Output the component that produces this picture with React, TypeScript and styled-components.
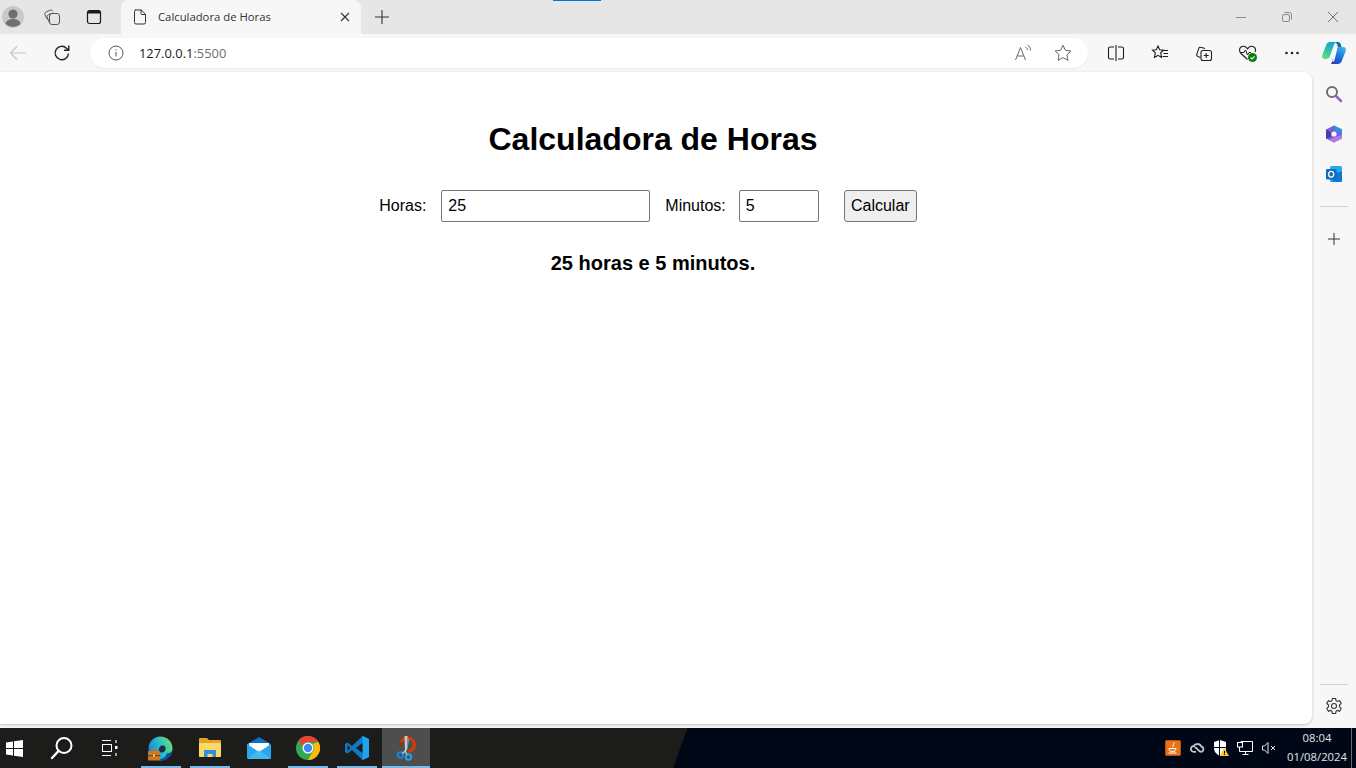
import { useState } from "react";
import styled, { createGlobalStyle } from "styled-components";

const GlobalStyle = createGlobalStyle`
  html, body {
    margin: 0;
    padding: 0;
    background: #f7f7f7;
    overflow: hidden;
  }
  * {
    box-sizing: border-box;
  }
`;

export default function App() {
  const [horas, setHoras] = useState("25");
  const [minutos, setMinutos] = useState("5");

  return (
    <Screen>
      <GlobalStyle />
      <TabStrip>
        <StripLeft>
          <Avatar>
            <svg width="22" height="22" viewBox="0 0 22 22">
              <circle cx="11" cy="11" r="11" fill="#c9c9c7" />
              <circle cx="11" cy="8" r="4.6" fill="#6f6f6f" />
              <path d="M3.5 18c.6-3.6 3.6-5 7.500-5s6.900 1.400 7.500 5a11 11 0 0 1-15 0z" fill="#6f6f6f" />
            </svg>
          </Avatar>
          <StripButton>
            <svg width="18" height="18" viewBox="0 0 18 18" fill="none" stroke="#555" strokeWidth="1">
              <rect x="6.500" y="5.500" width="10" height="11" rx="2.500" />
              <path d="M6.500 14.800 4.300 9.500c-.5-1.300 0-2.300 1.200-2.800L9.800 5" />
              <path d="M4.300 11.500 2 6.800c-.5-1.200-.1-2.200 1.100-2.800l4-1.800c1.200-.4 2.100-.1 2.700 1" />
            </svg>
          </StripButton>
          <StripButton>
            <svg width="16" height="16" viewBox="0 0 16 16" fill="none">
              <rect x="1.500" y="1.500" width="13" height="13" rx="2" stroke="#1a1a1a" strokeWidth="1.200" />
              <path d="M2 2h12v2.500H2z" fill="#1a1a1a" />
            </svg>
          </StripButton>
        </StripLeft>
        <Tab>
          <svg width="14" height="16" viewBox="0 0 14 16" fill="none" stroke="#333" strokeWidth="1">
            <path d="M2.500 1h5.800L12.500 5.200V13.500a1.500 1.500 0 0 1-1.500 1.500H3a1.500 1.500 0 0 1-1.500-1.500V2.500A1.500 1.500 0 0 1 3 1z" />
            <path d="M8 1v3.500a1 1 0 0 0 1 1h3.500" />
          </svg>
          <TabTitle>Calculadora de Horas</TabTitle>
          <TabClose>
            <svg width="10" height="10" viewBox="0 0 10 10" stroke="#333" strokeWidth="1.100">
              <path d="M1 1l8 8M9 1L1 9" />
            </svg>
          </TabClose>
        </Tab>
        <NewTab>
          <svg width="16" height="16" viewBox="0 0 16 16" stroke="#333" strokeWidth="1.100">
            <path d="M8 1v14M1 8h14" />
          </svg>
        </NewTab>
        <LoadBar />
        <WindowControls>
          <WindowButton>
            <svg width="12" height="12" viewBox="0 0 12 12" stroke="#8a8a8a">
              <path d="M1 6.500h10" />
            </svg>
          </WindowButton>
          <WindowButton>
            <svg width="12" height="12" viewBox="0 0 12 12" fill="none" stroke="#8a8a8a">
              <rect x="1.500" y="3.500" width="7" height="7" rx="1.500" />
              <path d="M3.500 1.500h5a2 2 0 0 1 2 2v5" />
            </svg>
          </WindowButton>
          <WindowButton>
            <svg width="12" height="12" viewBox="0 0 12 12" stroke="#6f6f6f">
              <path d="M1 1l10 10M11 1L1 11" />
            </svg>
          </WindowButton>
        </WindowControls>
      </TabStrip>

      <Toolbar>
        <BackButton>
          <svg width="18" height="16" viewBox="0 0 18 16" fill="none" stroke="#c4c4c4" strokeWidth="1.200">
            <path d="M17 8H1.500M8 1.500 1.500 8 8 14.500" />
          </svg>
        </BackButton>
        <ReloadButton>
          <svg width="18" height="18" viewBox="0 0 18 18" fill="none" stroke="#222" strokeWidth="1.400">
            <path d="M15.500 9.500A6.700 6.700 0 1 1 13.500 4.200L15.500 6" />
            <path d="M15.800 1.500V6.300H11" />
          </svg>
        </ReloadButton>
        <AddressBar>
          <svg width="16" height="16" viewBox="0 0 16 16" fill="none" stroke="#555">
            <circle cx="8" cy="8" r="7" />
            <path d="M8 7v4.500M8 4.300v1.200" />
          </svg>
          <UrlText>
            127.0.0.1<UrlPort>:5500</UrlPort>
          </UrlText>
          <AddressActions>
            <AddressIcon>
              <svg width="18" height="18" viewBox="0 0 18 18" fill="none" stroke="#666" strokeWidth="1">
                <path d="M1.500 16 6.500 3.500 11.500 16M3.300 12h6.400" />
                <path d="M11.500 3c1.300.7 1.900 1.800 2 3.200M13.500 1c2 1.200 3 3 3 5.500" />
              </svg>
            </AddressIcon>
            <AddressIcon>
              <svg width="18" height="18" viewBox="0 0 18 18" fill="none" stroke="#666" strokeWidth="1">
                <path d="M9 1.200l2.400 5.100 5.500.7-4 3.800 1 5.500L9 13.600l-4.900 2.700 1-5.500-4-3.800 5.500-.7z" />
              </svg>
            </AddressIcon>
          </AddressActions>
        </AddressBar>
        <ToolGroup>
          <ToolIcon>
            <svg width="18" height="18" viewBox="0 0 18 18" fill="none" stroke="#1f1f1f" strokeWidth="1.100">
              <path d="M7 3H3a1.500 1.500 0 0 0-1.500 1.500v9A1.500 1.500 0 0 0 3 15h4M11 3h4a1.500 1.500 0 0 1 1.500 1.500v9A1.500 1.500 0 0 1 15 15h-4M9 1v16" />
            </svg>
          </ToolIcon>
          <ToolIcon>
            <svg width="18" height="18" viewBox="0 0 18 18" fill="none" stroke="#1f1f1f" strokeWidth="1.100">
              <path d="M7 2l1.700 3.700 3.800.5-2.800 2.600.8 4.700L7 11.300l-3.500 2.200.8-4.700L1.500 6.200l3.800-.5z" />
              <path d="M12 6.500h5M12.500 9.500h4.500M11.500 12.500h5.500" />
            </svg>
          </ToolIcon>
          <ToolIcon>
            <svg width="18" height="18" viewBox="0 0 18 18" fill="none" stroke="#1f1f1f" strokeWidth="1.100">
              <path d="M5.500 13.500 2.800 12.400c-.9-.4-1.300-1.300-1-2.100l2-6c.3-.9 1.200-1.300 2-1L10 4.500" />
              <rect x="6" y="6.500" width="10.500" height="10" rx="2" />
              <path d="M11.200 9v5M8.700 11.500h5" />
            </svg>
          </ToolIcon>
          <ToolIcon>
            <svg width="20" height="20" viewBox="0 0 20 20" fill="none">
              <path d="M9.500 16.500 3 10.500C1 8.500 1 5.500 3 4c1.800-1.300 4.300-1 5.500.7l1 1.200 1-1.200c1.200-1.700 3.700-2 5.500-.7 1.600 1.200 1.900 3.200 1 5" stroke="#1f1f1f" strokeWidth="1.100" />
              <path d="M2 9.500h4l1.500-2.500 2 5 1.500-2.500h2" stroke="#1f1f1f" strokeWidth="1" />
              <circle cx="14.500" cy="14.500" r="4.500" fill="#107c10" />
              <path d="M12.500 14.500l1.500 1.500 2.500-2.700" stroke="#fff" strokeWidth="1.100" />
            </svg>
          </ToolIcon>
          <ToolIcon>
            <svg width="16" height="4" viewBox="0 0 16 4" fill="#1f1f1f">
              <circle cx="2.500" cy="2" r="1.300" />
              <circle cx="8" cy="2" r="1.300" />
              <circle cx="13.500" cy="2" r="1.300" />
            </svg>
          </ToolIcon>
        </ToolGroup>
        <CopilotSlot>
          <svg width="24" height="22" viewBox="0 0 24 22">
            <defs>
              <linearGradient id="copLeft" x1="0.700" y1="0" x2="0.200" y2="1">
                <stop offset="0" stopColor="#1c9fd8" />
                <stop offset="0.600" stopColor="#33c9a0" />
                <stop offset="1" stopColor="#6fdc7c" />
              </linearGradient>
              <linearGradient id="copRight" x1="0.800" y1="0" x2="0.300" y2="1">
                <stop offset="0" stopColor="#3fb4f2" />
                <stop offset="0.600" stopColor="#1770d6" />
                <stop offset="1" stopColor="#2a3fbf" />
              </linearGradient>
            </defs>
            <path d="M13 0h3c1.500 0 2.500 1 3 3l.5 2H16c-.5-2-1.500-4.500-3-5z" fill="#0d6f9c" />
            <path d="M8 17h3.500L10 20c-.3.8-.6 1.500-1 2h6c-2 0-3.300-1-3.800-3l-.7-2z" fill="#1c3fb0" />
            <path d="M8 0h7c-2 .5-3 2-3.500 4L8 14c-.5 2-2 3-4 3H2.500C.5 17-.3 15 .3 13L4 3.500C4.700 1 6 0 8 0z" fill="url(#copLeft)" />
            <path d="M16 5h5.500c2 0 2.800 2 2.200 4L20 18.500c-.7 2.300-2 3.500-4.500 3.500H9c2-.5 3-2 3.500-4L15 8c.3-1.500.5-3 1-3z" fill="url(#copRight)" />
          </svg>
        </CopilotSlot>
      </Toolbar>

      <Middle>
        <Page>
          <Content>
            <Title>Calculadora de Horas</Title>
            <HoursForm onSubmit={(e) => e.preventDefault()}>
              <FieldLabel htmlFor="horas">Horas:</FieldLabel>
              <HoursInput id="horas" value={horas} onChange={(e) => setHoras(e.target.value)} />
              <MinutesLabel htmlFor="minutos">Minutos:</MinutesLabel>
              <MinutesInput id="minutos" value={minutos} onChange={(e) => setMinutos(e.target.value)} />
              <CalcButton type="submit">Calcular</CalcButton>
            </HoursForm>
            <Result>25 horas e 5 minutos.</Result>
          </Content>
        </Page>
        <Sidebar>
          <SideSlot>
            <svg width="18" height="18" viewBox="0 0 18 18" fill="none">
              <circle cx="7" cy="7" r="5" stroke="#6e6e6e" strokeWidth="2" />
              <path d="M10.800 10.800 16 16" stroke="#8f63c9" strokeWidth="2.600" strokeLinecap="round" />
            </svg>
          </SideSlot>
          <SideSlot>
            <svg width="18" height="18" viewBox="0 0 18 18">
              <path d="M9 .5 17 4.500v9L9 17.500 1 13.500v-9z" fill="#7a5fd0" />
              <path d="M9 .5 17 4.500V10L12 6.500 9 5.500z" fill="#2f8fe0" />
              <path d="M1 4.500 6 7.500V12L1 13.500z" fill="#4f38a8" />
              <path d="M17 10v3.500L9 17.500 4 15l5-2.500z" fill="#b878e8" />
              <circle cx="9" cy="9" r="2.600" fill="#f7f7f7" />
            </svg>
          </SideSlot>
          <SideSlot>
            <svg width="18" height="18" viewBox="0 0 18 18">
              <rect x="5" y="1" width="12" height="16" rx="1.500" fill="#28a8ea" />
              <path d="M10 8l7-1.500V16a1 1 0 0 1-1 1H7z" fill="#0f78d4" />
              <rect x="1" y="4" width="10.500" height="10.500" rx="1.200" fill="#0f6cbd" />
              <ellipse cx="6.200" cy="9.200" rx="2.500" ry="2.900" fill="none" stroke="#fff" strokeWidth="1.300" />
            </svg>
          </SideSlot>
          <SideDivider />
          <SideSlot>
            <svg width="14" height="14" viewBox="0 0 14 14" stroke="#333">
              <path d="M7 1v12M1 7h12" />
            </svg>
          </SideSlot>
          <SideSpacer />
          <BottomDivider />
          <SideSlot>
            <svg width="18" height="18" viewBox="0 0 18 18" fill="none" stroke="#333" strokeWidth="1.100">
              <path d="M7.400 1.500h3.200l.5 2.300 1.300.7 2.200-.8 1.600 2.800-1.700 1.600v1.700l1.700 1.600-1.600 2.800-2.200-.8-1.300.7-.5 2.400H7.400l-.5-2.400-1.300-.7-2.200.8-1.600-2.800 1.700-1.600V8.100L1.800 6.500l1.600-2.800 2.200.8 1.300-.7z" />
              <circle cx="9" cy="9" r="2.500" />
            </svg>
          </SideSlot>
        </Sidebar>
      </Middle>

      <Taskbar>
        <StartButton>
          <svg width="17" height="17" viewBox="0 0 17 17" fill="#fff">
            <path d="M0 2.500 7 1.500V8H0zM8 1.300 17 0V8H8zM0 9h7v6.500L0 14.500zM8 9h9v8L8 15.700z" />
          </svg>
        </StartButton>
        <TaskSlot>
          <svg width="24" height="24" viewBox="0 0 24 24" fill="none" stroke="#fff">
            <circle cx="14" cy="9.500" r="7.500" strokeWidth="2" />
            <path d="M8.500 15 2 22" strokeWidth="2.400" strokeLinecap="round" />
          </svg>
        </TaskSlot>
        <TaskSlot>
          <svg width="18" height="18" viewBox="0 0 18 18" fill="none" stroke="#fff">
            <path d="M1 1.500h9M1 16.500h9" />
            <rect x="1.500" y="5.500" width="9" height="7" />
            <path d="M15 1v3M15 14v3" strokeWidth="1.200" />
            <rect x="14" y="7" width="2.500" height="3" fill="#fff" stroke="none" />
          </svg>
        </TaskSlot>
        <AppGroup>
          <TaskApp $open>
            <svg width="25" height="25" viewBox="0 0 25 25">
              <defs>
                <linearGradient id="edgeRing" x1="0" y1="0.700" x2="1" y2="0.300">
                  <stop offset="0" stopColor="#1580d8" />
                  <stop offset="0.550" stopColor="#2cc0c8" />
                  <stop offset="1" stopColor="#6edc72" />
                </linearGradient>
              </defs>
              <circle cx="12.500" cy="12.500" r="12" fill="url(#edgeRing)" />
              <path d="M24.500 14c-.5 6-5.500 10.500-11.500 10.500-2 0-4-.5-5-1.500 5 1 10-1 10.500-5.500 1.500.3 4.500-.5 6-3.500z" fill="#0d4f9a" />
              <path d="M11 15c-.5-3 1-5.500 3.500-5.500s3.500 2 3 4c-.5 2-2 3-3.500 3-1.500 0-2.500-.5-3-1.500z" fill="#173042" />
              <rect x="0" y="15" width="12" height="9.500" rx="1" fill="#c8782a" />
              <rect x="0" y="19" width="12" height="1.200" fill="#7a4310" />
              <rect x="5" y="18.300" width="2" height="2.400" fill="#f2c46a" />
              <rect x="4" y="13" width="4" height="2.500" fill="none" stroke="#c8782a" />
            </svg>
          </TaskApp>
          <TaskApp $open>
            <svg width="24" height="22" viewBox="0 0 24 22">
              <path d="M1 2a1 1 0 0 1 1-1h7l2 2h11a1 1 0 0 1 1 1v15a1 1 0 0 1-1 1H2a1 1 0 0 1-1-1z" fill="#e0a526" />
              <path d="M1 6h22v13a1 1 0 0 1-1 1H2a1 1 0 0 1-1-1z" fill="#fbd968" />
              <path d="M6 20v-7h12v7h-3.500v-3h-5v3z" fill="#2f8fd8" />
            </svg>
          </TaskApp>
          <TaskApp>
            <svg width="24" height="22" viewBox="0 0 24 22">
              <path d="M0 7 12 0l12 7v13a2 2 0 0 1-2 2H2a2 2 0 0 1-2-2z" fill="#0c70c4" />
              <path d="M2 6h20v6l-10 5-10-5z" fill="#fff" />
              <path d="M0 7l12 8 12-8v13a2 2 0 0 1-2 2H2a2 2 0 0 1-2-2z" fill="#28a8ea" />
              <path d="M0 22 12 13l12 9z" fill="#50c0f2" opacity="0.700" />
            </svg>
          </TaskApp>
          <TaskApp $open>
            <svg width="24" height="24" viewBox="0 0 24 24">
              <circle cx="12" cy="12" r="12" fill="#34a853" />
              <path d="M12 0a12 12 0 0 1 10.400 6H12a6 6 0 0 0-5.600 3.900L2.400 4.300A12 12 0 0 1 12 0z" fill="#ea4335" />
              <path d="M22.400 6A12 12 0 0 1 12 24l4.900-8.600A6 6 0 0 0 16.500 8z" fill="#fbbc05" />
              <circle cx="12" cy="12" r="5.500" fill="#fff" />
              <circle cx="12" cy="12" r="4.200" fill="#4285f4" />
            </svg>
          </TaskApp>
          <TaskApp $open>
            <svg width="24" height="24" viewBox="0 0 24 24">
              <path d="M17.500 0 24 3v18l-6.500 3L7 14l-4.500 3.500L0 16V8l2.500-1.500L7 10z" fill="#0e7ac4" />
              <path d="M17.500 0 24 3v18l-6.500 3z" fill="#23a3ee" />
              <path d="M17.500 7 10.800 12l6.700 5z" fill="#1c1c1a" />
              <path d="M2.500 9 5.300 12l-2.800 3z" fill="#1c1c1a" />
            </svg>
          </TaskApp>
          <ActiveApp $open>
            <svg width="24" height="26" viewBox="0 0 24 26" fill="none">
              <path d="M7 7c2-4 6-5 9.500-3.500 3.500 1.800 5 6 3 9.500-1 2-3 3-5 3.500" stroke="#d83b01" strokeWidth="3" />
              <path d="M7 7c-.7 1.500-.5 3 .3 4.300" stroke="#a82e10" strokeWidth="2" />
              <path d="M10.500 1h3v12l-1 3h-1.500z" fill="#c9c9c9" />
              <path d="M13.500 3l2 1.500-2 9z" fill="#8a8a8a" />
              <circle cx="6.500" cy="20" r="2.700" stroke="#1585e0" strokeWidth="2" />
              <circle cx="14.500" cy="22" r="2.700" stroke="#1fa0ee" strokeWidth="2" />
              <path d="M8.500 18.500 11 16l2 3.500" stroke="#d0d0d0" strokeWidth="1.300" />
            </svg>
          </ActiveApp>
        </AppGroup>
        <Tray>
          <TrayIcon>
            <svg width="16" height="16" viewBox="0 0 16 16" fill="none">
              <rect x=".5" y=".5" width="15" height="15" rx="1" fill="#e8711a" stroke="#b5500f" />
              <path d="M9 2.500c1 2-2 2.500-1 4.500M4 8.500h7c0 2-1 3-3.500 3S4 10.500 4 8.500zM3.500 13h8" stroke="#fff" />
            </svg>
          </TrayIcon>
          <TrayIcon>
            <svg width="15" height="10" viewBox="0 0 15 10" fill="none" stroke="#c4c4c4" strokeWidth="1.800">
              <path d="M6 8.800H3.800a2.900 2.900 0 0 1 0-5.800C4.500 1.500 6 1 7.500 1c2 0 3.200 1.200 3.700 2.500a2.700 2.700 0 0 1 0 5.300C8.500 8.800 7 4 4.500 4.500" />
            </svg>
          </TrayIcon>
          <TrayIcon>
            <svg width="16" height="16" viewBox="0 0 16 16">
              <path d="M7 0l6 2v6c0 4-3 6.500-6 8-3-1.500-6-4-6-8V2z" fill="#fff" />
              <path d="M6.500 0v16M1 7.500h12" stroke="#000818" />
              <path d="M11.500 8 16 16H7z" fill="#f7c325" />
              <path d="M11.500 11v2.500M11.500 14.200v.8" stroke="#000" />
            </svg>
          </TrayIcon>
          <TrayIcon>
            <svg width="16" height="14" viewBox="0 0 16 14" fill="none" stroke="#fff">
              <path d="M4 3.500V.5h11.500v10h-13" />
              <rect x=".5" y="1.500" width="5" height="4.500" fill="#000818" />
              <path d="M2.500 6v4.500M8.500 10.500v3M5.500 13.500h6" />
            </svg>
          </TrayIcon>
          <TrayIcon>
            <svg width="14" height="14" viewBox="0 0 14 14" fill="none" stroke="#e4e4e4">
              <path d="M.5 5v4h2L6 12.500v-11L2.500 5zM9 5l4 4M13 5 9 9" />
            </svg>
          </TrayIcon>
          <Clock>
            <span>08:04</span>
            <span>01/08/2024</span>
          </Clock>
          <ShowDesktop />
        </Tray>
      </Taskbar>
    </Screen>
  );
}

const Screen = styled.div`
  width: 1356px;
  height: 768px;
  display: flex;
  flex-direction: column;
  background: #f7f7f7;
  font-family: "Open Sans", "Noto Sans", sans-serif;
  overflow: hidden;
`;

const TabStrip = styled.div`
  position: relative;
  height: 34px;
  display: flex;
  background: #e6e6e6;
`;

const StripLeft = styled.div`
  width: 121px;
  display: flex;
  align-items: center;
`;

const Avatar = styled.div`
  width: 26px;
  margin-right: 5px;
  display: flex;
  justify-content: center;
`;

const StripButton = styled.div`
  width: 42px;
  display: flex;
  justify-content: center;
  align-items: center;
`;

const Tab = styled.div`
  width: 240px;
  display: flex;
  align-items: center;
  padding: 0 9px 1px 12px;
  background: #f7f7f7;
  border-radius: 8px 8px 0 0;
`;

const TabTitle = styled.span`
  flex: 1;
  margin-left: 11px;
  font-size: 11.300px;
  color: #333;
  white-space: nowrap;
`;

const TabClose = styled.div`
  width: 14px;
  display: flex;
  justify-content: center;
`;

const NewTab = styled.div`
  width: 42px;
  display: flex;
  justify-content: center;
  align-items: center;
`;

const LoadBar = styled.div`
  position: absolute;
  left: 553px;
  top: 0;
  width: 48px;
  height: 1px;
  background: #0078d4;
`;

const WindowControls = styled.div`
  margin-left: auto;
  display: flex;
`;

const WindowButton = styled.div`
  width: 46px;
  display: flex;
  justify-content: center;
  align-items: center;
`;

const Toolbar = styled.div`
  height: 38px;
  display: flex;
  align-items: center;
`;

const BackButton = styled.div`
  width: 35px;
  display: flex;
  justify-content: center;
  align-items: center;
`;

const ReloadButton = styled.div`
  width: 55px;
  padding-right: 1px;
  display: flex;
  justify-content: center;
  align-items: center;
`;

const AddressBar = styled.div`
  width: 998px;
  height: 30px;
  display: flex;
  align-items: center;
  padding-left: 18px;
  border-radius: 15px;
  background: #fff;
  box-shadow: 0 1px 2px rgba(0, 0, 0, 0.06);
`;

const UrlText = styled.span`
  margin-left: 15px;
  font-size: 12.900px;
  color: #1a1a1a;
`;

const UrlPort = styled.span`
  color: #6f6f6f;
`;

const AddressActions = styled.div`
  margin-left: auto;
  display: flex;
  padding-right: 5px;
`;

const AddressIcon = styled.div`
  width: 40px;
  height: 30px;
  display: flex;
  justify-content: center;
  align-items: center;
`;

const ToolIcon = styled.div`
  width: 44px;
  height: 30px;
  display: flex;
  justify-content: center;
  align-items: center;
`;

const ToolGroup = styled.div`
  display: flex;
  margin-left: 6px;
`;

const CopilotSlot = styled.div`
  width: 40px;
  display: flex;
  justify-content: center;
`;

const Middle = styled.div`
  height: 656px;
  display: flex;
`;

const Page = styled.main`
  width: 1312px;
  height: 652px;
  background: #fff;
  border-radius: 0 8px 8px 0;
  box-shadow: 0 1px 3px rgba(0, 0, 0, 0.22);
`;

const Content = styled.div`
  width: 1306px;
  padding-top: 49px;
  color: #000;
  font-family: "Liberation Sans", Arial, sans-serif;
  text-align: center;
`;

const Title = styled.h1`
  margin: 0 0 32px;
  font-size: 32px;
  line-height: 37px;
  font-weight: 700;
`;

const HoursForm = styled.form`
  display: flex;
  justify-content: center;
  align-items: center;
  height: 32px;
  padding-right: 10px;
`;

const FieldLabel = styled.label`
  font-size: 16px;
  margin-right: 15px;
`;

const MinutesLabel = styled(FieldLabel)`
  margin-right: 13px;
`;

const TextField = styled.input`
  height: 32px;
  padding: 0 6px;
  border: 1px solid #767676;
  border-radius: 2px;
  background: #fff;
  color: #000;
  font: 16px "Liberation Sans", Arial, sans-serif;
  outline: none;
`;

const HoursInput = styled(TextField)`
  width: 209px;
  margin-right: 15px;
`;

const MinutesInput = styled(TextField)`
  width: 80px;
  margin-right: 25px;
`;

const CalcButton = styled.button`
  width: 73px;
  height: 32px;
  padding: 0;
  border: 1px solid #767676;
  border-radius: 3px;
  background: #efefef;
  color: #000;
  font: 16px "Liberation Sans", Arial, sans-serif;
`;

const Result = styled.p`
  margin: 30px 0 0;
  font-size: 20px;
  line-height: 23px;
  font-weight: 700;
`;

const Sidebar = styled.aside`
  width: 44px;
  display: flex;
  flex-direction: column;
  align-items: center;
  padding: 2px 0;
`;

const SideSlot = styled.div`
  width: 44px;
  height: 40px;
  display: flex;
  justify-content: center;
  align-items: center;
`;

const SideDivider = styled.div`
  width: 28px;
  height: 1px;
  margin: 12px 0;
  background: #d0d0d0;
`;

const BottomDivider = styled(SideDivider)`
  margin: 0 0 1px;
`;

const SideSpacer = styled.div`
  flex: 1;
`;

const Taskbar = styled.footer`
  height: 40px;
  display: flex;
  background: linear-gradient(110deg, #1c1c1a 0 645.800px, #000818 646.400px);
`;

const TaskSlot = styled.div`
  width: 48px;
  display: flex;
  justify-content: center;
  align-items: center;
`;

const StartButton = styled(TaskSlot)`
  width: 38px;
  justify-content: flex-start;
  padding-left: 6px;
`;

const AppGroup = styled.div`
  display: flex;
  margin-left: 2px;
`;

const TaskApp = styled.div<{ $open?: boolean }>`
  position: relative;
  width: 49px;
  display: flex;
  justify-content: center;
  align-items: center;
  &::after {
    content: "";
    display: ${(p) => (p.$open ? "block" : "none")};
    position: absolute;
    bottom: 0;
    left: 5px;
    right: 4px;
    height: 2px;
    background: #76b9ed;
  }
`;

const ActiveApp = styled(TaskApp)`
  width: 48px;
  margin-left: 1px;
  background: #4d4e4e;
  &::after {
    left: 0;
    right: 0;
  }
`;

const Tray = styled.div`
  margin-left: auto;
  display: flex;
  align-items: center;
`;

const TrayIcon = styled.div`
  width: 24px;
  display: flex;
  justify-content: center;
  align-items: center;
`;

const Clock = styled.div`
  width: 64px;
  margin-left: 4px;
  padding-bottom: 2px;
  display: flex;
  flex-direction: column;
  align-items: center;
  gap: 3px;
  font-size: 11.300px;
  line-height: 16px;
  color: #e4e4e4;
`;

const ShowDesktop = styled.div`
  width: 1px;
  height: 40px;
  margin-left: 2px;
  margin-right: 4px;
  background: #6a6a6a;
`;
